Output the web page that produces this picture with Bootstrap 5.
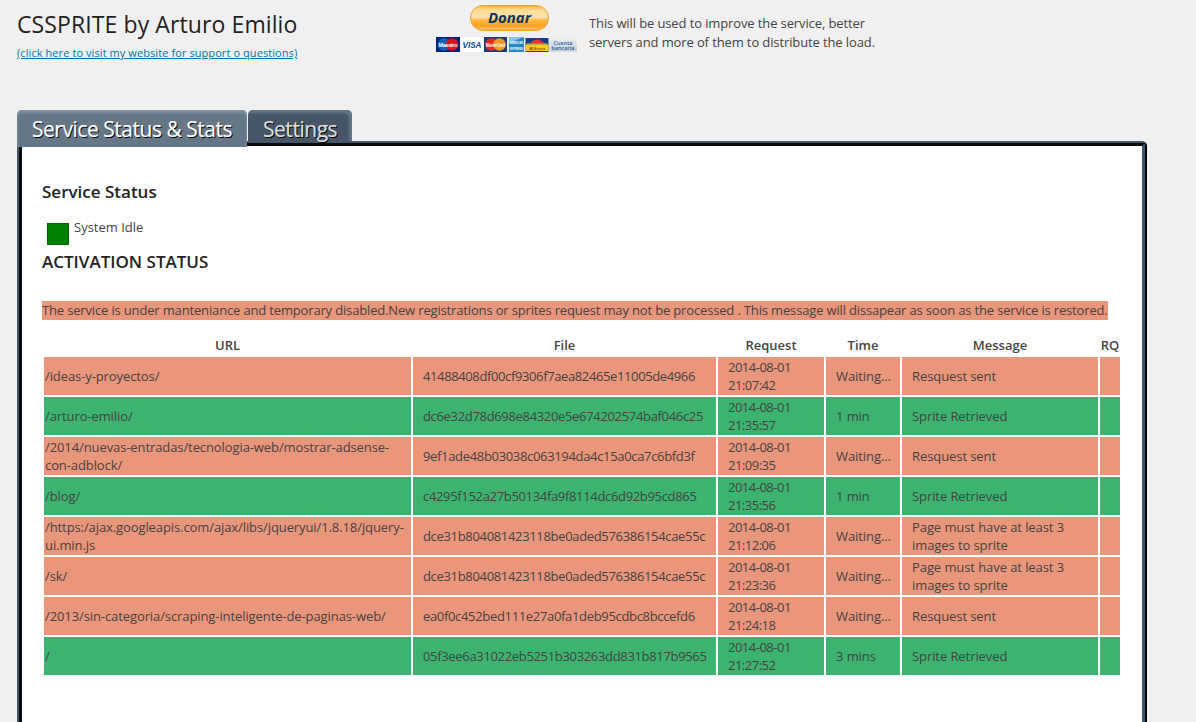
<!DOCTYPE html>
<html lang="en">
<head>
<meta charset="utf-8">
<title>CSSPRITE by Arturo Emilio</title>
<link href="https://cdn.jsdelivr.net/npm/bootstrap@5.3.0/dist/css/bootstrap.min.css" rel="stylesheet">
<style>
body{background:#f0f0f0;color:#444;font:13px/18.2px "Open Sans",sans-serif;height:722px;overflow:hidden}
.top-area{height:110px;padding-left:17px}
.intro{width:419px;padding-top:10px}
.intro h1{font-size:23px;line-height:29px;font-weight:400;color:#222;margin:0;letter-spacing:.1px}
.intro a{font-size:11px;line-height:16px;color:#0074a2;display:block;margin-top:6px;white-space:nowrap;letter-spacing:.08px;width:281px}
.donate{width:153px}
.donate svg{display:block}
.note{line-height:19px;padding-top:14px;white-space:nowrap;letter-spacing:-.115px}
.tabs{height:31px;padding-left:17px}
.tabs .nav-link{font-size:21px;letter-spacing:-.47px;line-height:28px;border:0;border-radius:5px 5px 0 0;text-shadow:1px 1px 0 #000;-webkit-text-stroke:.2px;white-space:nowrap;height:31px;padding:5px 0 0 15px;background:#465666;color:#ddd;width:104px;box-shadow:inset -3px 3px 3px #64788b}
.tabs .nav-link.active{height:37px;width:230px;background:#667788;color:#fff;box-shadow:inset 0 3px 3px #8093a3;margin-right:1px;position:relative;z-index:2}
.panel{margin-left:17px;width:1130px;height:581px;border:2px solid #42566a;border-right-color:#000;border-bottom:0;border-radius:0 5px 0 0}
.panel-in{border:3px solid #050a0d;border-right-color:#42566a;border-bottom:0;background:#fff;height:579px;padding:35px 20px 0}
.panel h2{font-size:17px;line-height:22px;font-weight:600;color:#222;margin:0}
.state{height:48px;padding:15px 0 0 5px}
.lamp{width:22px;height:22px;background:green;border:1px solid #006400;margin:5px 5px 0 0}
.alert-line{margin-top:28px;height:34px;white-space:nowrap;letter-spacing:-.157px}
.alert-line span{display:inline-block;height:19px;line-height:19px;background:#e9967a}
.log{width:1080px;table-layout:fixed;border-collapse:separate;border-spacing:2px;line-height:18px}
.log th{height:18px;line-height:16px;padding:0 0 2px;text-align:center;font-weight:600;white-space:nowrap}
.log td{height:38px;padding:1px 10px;vertical-align:middle;letter-spacing:-.08px}
.log td:first-child{padding:1px;letter-spacing:-.095px}
.log td:nth-child(2){letter-spacing:-.33px}
.log tr:first-child td:nth-child(2){letter-spacing:-.38px}
.log td:nth-child(3){letter-spacing:-.5px}
.log td:last-child{padding:1px}
.wait td{background:#e9967a}
.done td{background:#3cb371}
</style>
</head>
<body>
<header class="top-area d-flex">
  <div class="intro"><h1>CSSPRITE by Arturo Emilio</h1><a href="#">(click here to visit my website for support o questions)</a></div>
  <div class="donate">
    <svg width="144" height="54" viewBox="0 0 144 54">
      <defs>
        <linearGradient id="gold" x2="0" y2="1"><stop offset="0" stop-color="#ffb23e"/><stop offset=".2" stop-color="#ffdd9b"/><stop offset=".5" stop-color="#ffe2ad"/><stop offset=".54" stop-color="#ffc257"/><stop offset=".8" stop-color="#ffa11e"/><stop offset="1" stop-color="#ffc76b"/></linearGradient>
        <linearGradient id="bank" x2="0" y2="1"><stop offset="0" stop-color="#e8edf1"/><stop offset="1" stop-color="#bccddd"/></linearGradient>
      </defs>
      <rect x="34.5" y="5.500" width="78" height="25" rx="12.500" fill="url(#gold)" stroke="#f5a02d"/>
      <text x="73.500" y="22.500" text-anchor="middle" textLength="43" lengthAdjust="spacingAndGlyphs" font-family="Open Sans" font-size="15" font-weight="700" font-style="italic" fill="#0b3562">Donar</text>
      <g font-family="Liberation Sans" font-weight="700" text-anchor="middle">
        <rect y="37" width="24" height="15" fill="#00247a"/><circle cx="8" cy="44.500" r="6.200" fill="#0f66bc"/><circle cx="16" cy="44.500" r="6.200" fill="#e30b1c"/><text x="12" y="46.500" font-size="5.500" textLength="19" fill="#fff">Maestro</text>
        <rect x="25" y="37" width="22" height="15" fill="#fff"/><text x="36" y="48" font-size="9" font-style="italic" textLength="19" lengthAdjust="spacingAndGlyphs" fill="#0d4686">VISA</text>
        <rect x="48" y="37" width="23" height="15" fill="#1d3d79"/><circle cx="55.500" cy="44.500" r="6.200" fill="#e52b21"/><circle cx="63.500" cy="44.500" r="6.200" fill="#f49a22"/><text x="59.500" y="46.500" font-size="5" textLength="19" lengthAdjust="spacingAndGlyphs" fill="#fff">MasterCard</text>
        <rect x="73" y="37" width="15" height="15" fill="#2687c8"/><path d="M73 37h15L73 43z" fill="#8dc4e6"/><text x="80.500" y="44" font-size="3.500" textLength="13" lengthAdjust="spacingAndGlyphs" fill="#fff">AMERICAN</text><text x="80.500" y="49.500" font-size="3.500" textLength="13" lengthAdjust="spacingAndGlyphs" fill="#fff">EXPRESS</text>
        <rect x="89.500" y="38" width="23" height="14" fill="#173e8c"/><path d="M89.500 44.500h23v6.500h-23z" fill="#ffc91f"/><path d="M94 43q7-7 14 0z" fill="#ee3827"/><path d="M91 44h20" stroke="#ffd42b"/><text x="101" y="50" font-size="4" textLength="16" lengthAdjust="spacingAndGlyphs" fill="#80501b">4B Aurora</text>
        <rect x="113.500" y="39" width="27.500" height="12.500" fill="url(#bank)"/><g font-family="Open Sans" font-weight="600"><text x="127" y="44.500" font-size="6" textLength="19" lengthAdjust="spacingAndGlyphs" fill="#365f93">Cuenta</text><text x="127" y="50.200" font-size="6" textLength="23" lengthAdjust="spacingAndGlyphs" fill="#365f93">bancaria</text></g>
      </g>
    </svg>
  </div>
  <div class="note">This will be used to improve the service, better<br>servers and more of them to distribute the load.</div>
</header>
<nav class="tabs nav"><a class="nav-link active" href="#">Service Status &amp; Stats</a><a class="nav-link" href="#">Settings</a></nav>
<main class="panel"><div class="panel-in">
  <h2>Service Status</h2>
  <div class="state d-flex align-items-start"><span class="lamp"></span><span>System Idle</span></div>
  <h2>ACTIVATION STATUS</h2>
  <div class="alert-line"><span>The service is under manteniance and temporary disabled.New registrations or sprites request may not be processed . This message will dissapear as soon as the service is restored.</span></div>
  <table class="log">
    <colgroup><col style="width:367px"><col style="width:303px"><col style="width:106px"><col style="width:74px"><col style="width:196px"><col style="width:20px"></colgroup>
    <thead><tr><th>URL</th><th>File</th><th>Request</th><th>Time</th><th>Message</th><th>RQ</th></tr></thead>
    <tbody>
    <tr class="wait"><td>/ideas-y-proyectos/</td><td>41488408df00cf9306f7aea82465e11005de4966</td><td>2014-08-01<br>21:07:42</td><td>Waiting...</td><td>Resquest sent</td><td></td></tr>
    <tr class="done"><td>/arturo-emilio/</td><td>dc6e32d78d698e84320e5e674202574baf046c25</td><td>2014-08-01<br>21:35:57</td><td>1 min</td><td>Sprite Retrieved</td><td></td></tr>
    <tr class="wait"><td>/2014/nuevas-entradas/tecnologia-web/mostrar-adsense-<br>con-adblock/</td><td>9ef1ade48b03038c063194da4c15a0ca7c6bfd3f</td><td>2014-08-01<br>21:09:35</td><td>Waiting...</td><td>Resquest sent</td><td></td></tr>
    <tr class="done"><td>/blog/</td><td>c4295f152a27b50134fa9f8114dc6d92b95cd865</td><td>2014-08-01<br>21:35:56</td><td>1 min</td><td>Sprite Retrieved</td><td></td></tr>
    <tr class="wait"><td>/https:/ajax.googleapis.com/ajax/libs/jqueryui/1.8.18/jquery-<br>ui.min.js</td><td>dce31b804081423118be0aded576386154cae55c</td><td>2014-08-01<br>21:12:06</td><td>Waiting...</td><td>Page must have at least 3<br>images to sprite</td><td></td></tr>
    <tr class="wait"><td>/sk/</td><td>dce31b804081423118be0aded576386154cae55c</td><td>2014-08-01<br>21:23:36</td><td>Waiting...</td><td>Page must have at least 3<br>images to sprite</td><td></td></tr>
    <tr class="wait"><td>/2013/sin-categoria/scraping-inteligente-de-paginas-web/</td><td>ea0f0c452bed111e27a0fa1deb95cdbc8bccefd6</td><td>2014-08-01<br>21:24:18</td><td>Waiting...</td><td>Resquest sent</td><td></td></tr>
    <tr class="done"><td>/</td><td>05f3ee6a31022eb5251b303263dd831b817b9565</td><td>2014-08-01<br>21:27:52</td><td>3 mins</td><td>Sprite Retrieved</td><td></td></tr>
    </tbody>
  </table>
</div></main>
<script src="https://cdn.jsdelivr.net/npm/bootstrap@5.3.0/dist/js/bootstrap.bundle.min.js"></script>
</body>
</html>
